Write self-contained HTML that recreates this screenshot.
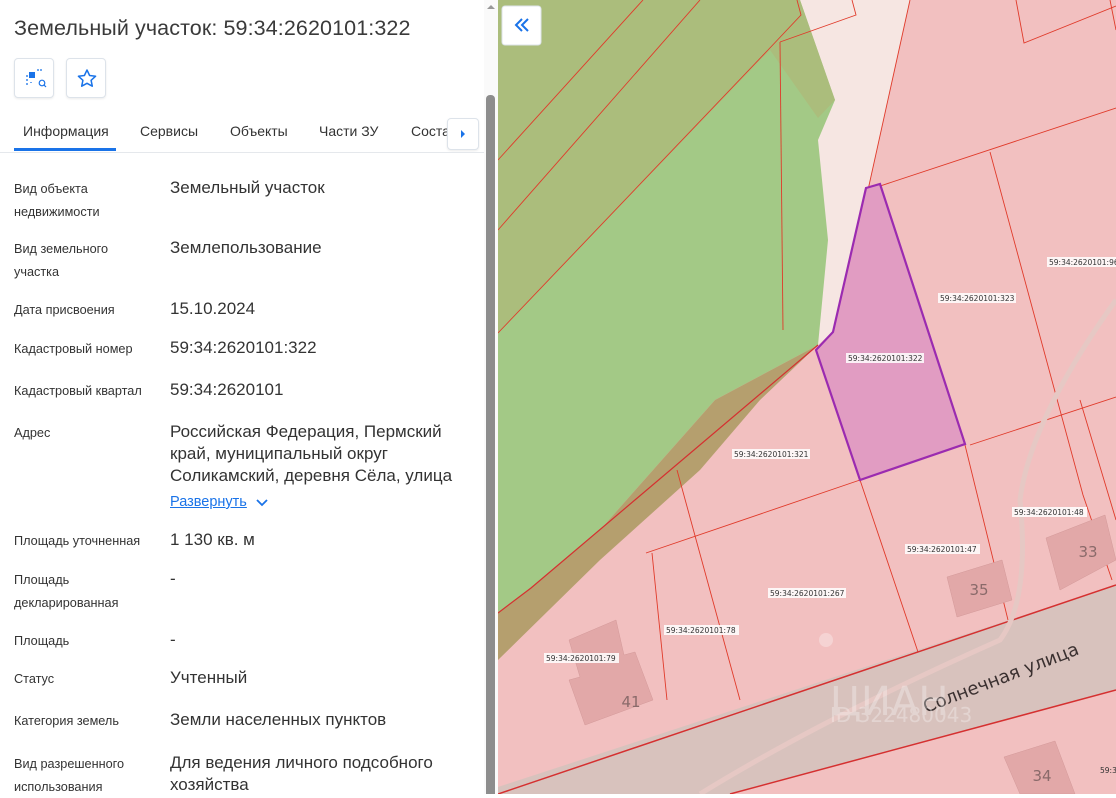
<!DOCTYPE html>
<html><head><meta charset="utf-8"><style>
*{margin:0;padding:0;box-sizing:border-box}
body{width:1116px;height:794px;overflow:hidden;position:relative;font-family:"Liberation Sans","DejaVu Sans",sans-serif;background:#fff;color:#333}
.p{position:absolute;white-space:nowrap}
.l{position:absolute;left:14px;font-size:12.7px;color:#333;line-height:22.5px}
.v{position:absolute;left:170px;font-size:17px;color:#333;line-height:22px;white-space:nowrap}
.btn{position:absolute;width:40px;height:40px;border:1px solid #dde3ea;border-radius:4px;background:#fff;box-shadow:0 1px 2px rgba(0,0,0,.08)}
.tab{position:absolute;top:123px;font-size:14px;color:#333}
</style></head><body>
<div class="p" style="left:14px;top:16px;font-size:21.5px;color:#3a3a3a;letter-spacing:0.1px">Земельный участок: 59:34:2620101:322</div>
<div class="btn" style="left:14px;top:58px"><svg width="40" height="40" viewBox="0 0 40 40"><rect x="14" y="13" width="6" height="6" fill="#1a73e8"/><path d="M22 11h2M25 11h2M12 16v2M12 20v2M12 24v2M16 23v1" stroke="#1a73e8" stroke-width="1.3"/><circle cx="27" cy="24" r="2.8" fill="none" stroke="#1a73e8" stroke-width="1.2"/><path d="M29 26l2 2" stroke="#1a73e8" stroke-width="1.2"/></svg></div>
<div class="btn" style="left:66px;top:58px"><svg width="40" height="40" viewBox="0 0 40 40"><path d="M20 11l2.6 5.5 6 .7-4.5 4.1 1.2 5.9L20 24.3l-5.3 2.9 1.2-5.9-4.5-4.1 6-.7z" fill="none" stroke="#1a73e8" stroke-width="1.5" stroke-linejoin="round"/></svg></div>
<div class="tab" style="left:23px">Информация</div>
<div style="position:absolute;left:14px;top:148px;width:102px;height:3px;background:#1a73e8"></div>
<div class="tab" style="left:140px">Сервисы</div>
<div class="tab" style="left:230px">Объекты</div>
<div class="tab" style="left:319px">Части ЗУ</div>
<div class="tab" style="left:411px">Соста</div>
<div class="btn" style="left:447px;top:118px;width:32px;height:32px"><svg width="30" height="30"><path d="M13 11l4 4-4 4z" fill="#1a73e8"/></svg></div>
<div style="position:absolute;left:0;top:152px;width:484px;height:1px;background:#e5e8ec"></div>
<div style="position:absolute;left:484px;top:0;width:14px;height:794px;background:#fafafa"></div>
<div style="position:absolute;left:486px;top:95px;width:9px;height:699px;background:#8d8d8d;border-radius:4px 4px 0 0"></div>
<svg style="position:absolute;left:485px;top:3px" width="12" height="8"><path d="M2 6l4-4 4 4z" fill="#999"/></svg>

<div class="l" style="top:178px">Вид объекта<br>недвижимости</div><div class="v" style="top:177px">Земельный участок</div>
<div class="l" style="top:238px">Вид земельного<br>участка</div><div class="v" style="top:237px">Землепользование</div>
<div class="l" style="top:299px">Дата присвоения</div><div class="v" style="top:298px">15.10.2024</div>
<div class="l" style="top:338px">Кадастровый номер</div><div class="v" style="top:337px">59:34:2620101:322</div>
<div class="l" style="top:380px">Кадастровый квартал</div><div class="v" style="top:379px">59:34:2620101</div>
<div class="l" style="top:422px">Адрес</div><div class="v" style="top:421px">Российская Федерация, Пермский<br>край, муниципальный округ<br>Соликамский, деревня Сёла, улица</div>
<div class="p" style="left:170px;top:494px;font-size:14.5px;color:#1a73e8;text-decoration:underline">Развернуть</div>
<svg style="position:absolute;left:255px;top:498px" width="14" height="10"><path d="M2 2l5 5 5-5" fill="none" stroke="#1a73e8" stroke-width="1.8"/></svg>
<div class="l" style="top:530px">Площадь уточненная</div><div class="v" style="top:529px">1 130 кв. м</div>
<div class="l" style="top:569px">Площадь<br>декларированная</div><div class="v" style="top:568px">-</div>
<div class="l" style="top:630px">Площадь</div><div class="v" style="top:629px">-</div>
<div class="l" style="top:668px">Статус</div><div class="v" style="top:667px">Учтенный</div>
<div class="l" style="top:710px">Категория земель</div><div class="v" style="top:709px">Земли населенных пунктов</div>
<div class="l" style="top:753px">Вид разрешенного<br>использования</div><div class="v" style="top:752px">Для ведения личного подсобного<br>хозяйства</div>

<svg style="position:absolute;left:498px;top:0" width="618" height="794" viewBox="498 0 618 794" font-family="DejaVu Sans, sans-serif">
<rect x="498" y="0" width="618" height="794" fill="#f2c0c0"/>
<polygon points="750,0 910,0 868,190 835,330 818,345" fill="#f6e6e2"/>
<polygon points="498,0 800,0 835,100 818,140 828,240 818,345 715,400 600,530 531,588 498,613" fill="#a3c986"/>
<polygon points="498,0 800,0 835,100 818,118 770,50 498,333" fill="#abbd7c"/>
<polygon points="818,345 715,400 600,530 531,588 498,613 498,660 600,560 700,470 760,400" fill="#b59f6e"/>
<polygon points="498,787 1116,585 1116,690 730,794 498,794" fill="#d8c2bd"/>
<g fill="none" stroke="#e03a2a" stroke-width="0.9">
<path d="M498 160 L643 0 M498 230 L700 0 M498 333 L768 50 L801 15 L797 0"/>
<path d="M780 42 L856 15 L852 0"/>
<path d="M780 42 L783 330"/>
<path d="M910 0 L868 190"/>
<path d="M868 190 L1116 108 M970 445 L1116 397 M860 480 L646 553"/>
<path d="M1016 0 L1024 43 L1116 6"/>
<path d="M990 152 L1083 495 L1112 580 M1080 400 L1116 520"/>
<path d="M860 480 L918 652 M965 445 L1008 620 M652 553 L667 700 M677 470 L740 700 M1110 0 L1116 30"/>
</g>
<path d="M498 794 L1116 585" stroke="#d53030" stroke-width="1.5" fill="none"/>
<path d="M730 794 L1116 690" stroke="#d53030" stroke-width="1.5" fill="none"/>
<path d="M818 345 L531 588 L498 613" stroke="#d53030" stroke-width="1.2" fill="none"/>
<path d="M1116 300 Q1030 420 1020 500 Q1030 600 1000 640 Q820 720 700 794" stroke="#e6c8c4" stroke-width="5" fill="none"/>
<polygon points="866,188 880,184 965,444 860,480 816,350 833,332" fill="#e19cc2" stroke="#9b2bb0" stroke-width="2.2"/>
<g fill="#e2a8a8" stroke="#d39999" stroke-width="0.5">
<polygon points="569,640 616,620 624,655 635,652 653,700 585,725 569,680 580,677"/>
<polygon points="947,577 1002,560 1012,600 957,617"/>
<polygon points="1046,538 1105,515 1116,560 1060,590"/>
<polygon points="1004,757 1055,741 1075,794 1020,794"/>
</g>
<g font-size="15" fill="#8a6a6a" text-anchor="middle"><text x="631" y="707">41</text><text x="979" y="595">35</text><text x="1088" y="557">33</text><text x="1042" y="781">34</text></g>
<text x="0" y="0" font-size="18" fill="#3a3030" transform="translate(926,713) rotate(-21)">Солнечная  улица</text>
<g font-size="7.5" fill="#333">
<g fill="#fff" opacity=".85"><rect x="938" y="293" width="78" height="10"/><rect x="846" y="353" width="78" height="10"/><rect x="732" y="449" width="78" height="10"/><rect x="1012" y="507" width="75" height="10"/><rect x="905" y="544" width="75" height="10"/><rect x="768" y="588" width="78" height="10"/><rect x="664" y="625" width="75" height="10"/><rect x="544" y="653" width="75" height="10"/><rect x="1047" y="257" width="70" height="10"/></g>
<text x="940" y="301">59:34:2620101:323</text><text x="848" y="361">59:34:2620101:322</text><text x="734" y="457">59:34:2620101:321</text><text x="1014" y="515">59:34:2620101:48</text><text x="907" y="552">59:34:2620101:47</text><text x="770" y="596">59:34:2620101:267</text><text x="666" y="633">59:34:2620101:78</text><text x="546" y="661">59:34:2620101:79</text><text x="1049" y="265">59:34:2620101:96</text><text x="1100" y="773">59:3</text>
</g>
<g fill="#fff" opacity=".3"><circle cx="826" cy="640" r="7"/><text x="830" y="715" font-size="40">ЦИАН</text><text x="830" y="722" font-size="20">ID 322480043</text></g>
<rect x="502" y="6" width="39" height="39" rx="3" fill="#fff" stroke="#dde3ea"/>
<path d="M522 19l-6 6 6 6M528 19l-6 6 6 6" stroke="#1a73e8" stroke-width="2" fill="none"/>
</svg>
</body></html>
